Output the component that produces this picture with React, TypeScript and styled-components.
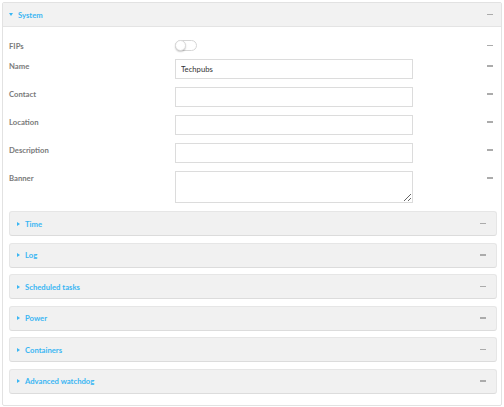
import React from "react";
import styled, { createGlobalStyle } from "styled-components";

const BLUE = "#3ab6f3";

const Global = createGlobalStyle`
	html, body {
		margin: 0;
		padding: 0;
		background: #ffffff;
	}
	body {
		font-family: Lato, "Liberation Sans", Arial, sans-serif;
	}
	* {
		box-sizing: border-box;
	}
`;

const Page = styled.div`
	padding: 2px 2px 0 2px;
`;

const Panel = styled.section`
	width: 500px;
	border: 1px solid #e2e2e2;
	border-radius: 2px;
	background: #ffffff;
`;

const PanelHeader = styled.div`
	height: 24px;
	display: flex;
	align-items: center;
	padding: 0 8px 0 6px;
	background: #f2f2f2;
	border-bottom: 1px solid #e4e4e4;
`;

const Title = styled.span`
	flex: 1;
	display: flex;
	align-items: center;
	gap: 5px;
	color: ${BLUE};
	font-size: 7.7px;
	font-weight: 700;
`;

const Minus = styled.span`
	display: block;
	width: 6px;
	height: 1.5px;
	background: #ababab;
	flex: none;
`;

const Body = styled.div`
	padding: 13px 4.5px 11px 5.5px;
`;

const Form = styled.div`
	display: flex;
	flex-direction: column;
	gap: 8px;
	padding: 0 3.5px 0 0.5px;
`;

const Row = styled.div<{ $center?: boolean }>`
	display: grid;
	grid-template-columns: 166px 238px 1fr 6px;
	align-items: ${(p) => (p.$center ? "center" : "start")};
`;

const Label = styled.label<{ $center?: boolean }>`
	font-size: 7.7px;
	font-weight: 700;
	color: #7a7a7a;
	line-height: 10px;
	padding-top: ${(p) => (p.$center ? "0" : "1.5px")};
`;

const RowMinus = styled(Minus)<{ $center?: boolean }>`
	grid-column: 4;
	margin-top: ${(p) => (p.$center ? "0" : "6px")};
`;

const Input = styled.input`
	width: 238px;
	height: 20px;
	border: 1px solid #dcdcdc;
	border-radius: 0;
	padding: 0 5px;
	font-family: Lato, "Liberation Sans", Arial, sans-serif;
	font-size: 7.7px;
	color: #333333;
	outline: none;
	background: #ffffff;
`;

const Area = styled.textarea`
	display: block;
	width: 238px;
	height: 31.5px;
	border: 1px solid #dcdcdc;
	border-radius: 0;
	padding: 3px 5px;
	font-family: Lato, "Liberation Sans", Arial, sans-serif;
	font-size: 7.7px;
	color: #333333;
	outline: none;
	resize: vertical;
	background: #ffffff;
`;

const Toggle = styled.span`
	position: relative;
	display: block;
	width: 22px;
	height: 11px;
	border: 1px solid #d6d6d6;
	border-radius: 6px;
	background: #ffffff;
`;

const Knob = styled.span`
	position: absolute;
	left: -1px;
	top: -1px;
	width: 11px;
	height: 11px;
	border-radius: 50%;
	background: #ffffff;
	border: 1px solid #dadada;
	box-shadow: 0 1px 1.5px rgba(0, 0, 0, 0.2);
`;

const Sections = styled.div`
	display: flex;
	flex-direction: column;
	gap: 6.5px;
	margin-top: 8.5px;
`;

const Section = styled.div`
	height: 25px;
	display: flex;
	align-items: center;
	padding: 0 9.5px 0 7px;
	background: #f1f1f1;
	border: 1px solid #e6e6e6;
	border-bottom-color: #dcdcdc;
	border-radius: 3px;
`;

const SectionTitle = styled.span`
	flex: 1;
	display: flex;
	align-items: center;
	gap: 5.5px;
	color: ${BLUE};
	font-size: 7.7px;
	font-weight: 700;
`;

const Caret = ({ open }: { open?: boolean }) =>
	open ? (
		<svg width="4" height="3" viewBox="0 0 4 3">
			<polygon points="0,0 4,0 2,3" fill={BLUE} />
		</svg>
	) : (
		<svg width="3" height="4" viewBox="0 0 3 4">
			<polygon points="0,0 3,2 0,4" fill={BLUE} />
		</svg>
	);

const fields = [
	{ label: "Name", value: "Techpubs" },
	{ label: "Contact", value: "" },
	{ label: "Location", value: "" },
	{ label: "Description", value: "" },
];

const groups = ["Time", "Log", "Scheduled tasks", "Power", "Containers", "Advanced watchdog"];

export default function App() {
	return (
		<Page>
			<Global />
			<Panel>
				<PanelHeader>
					<Title>
						<Caret open />
						System
					</Title>
					<Minus />
				</PanelHeader>
				<Body>
					<Form>
						<Row $center>
							<Label $center>FIPs</Label>
							<Toggle>
								<Knob />
							</Toggle>
							<RowMinus $center />
						</Row>
						{fields.map((f) => (
							<Row key={f.label}>
								<Label>{f.label}</Label>
								<Input defaultValue={f.value} />
								<RowMinus />
							</Row>
						))}
						<Row>
							<Label>Banner</Label>
							<Area />
							<RowMinus />
						</Row>
					</Form>
					<Sections>
						{groups.map((g) => (
							<Section key={g}>
								<SectionTitle>
									<Caret />
									{g}
								</SectionTitle>
								<Minus />
							</Section>
						))}
					</Sections>
				</Body>
			</Panel>
		</Page>
	);
}
